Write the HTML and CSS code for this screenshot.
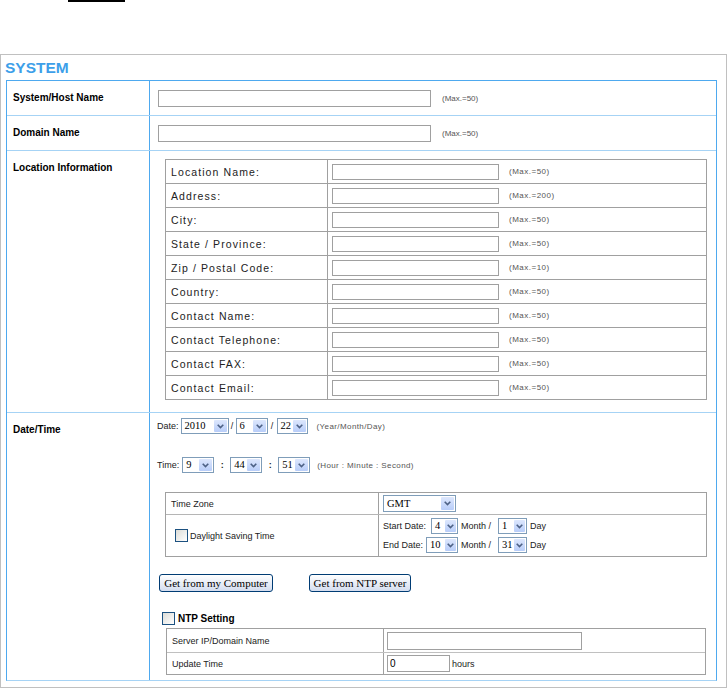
FILE: index.html
```html
<!DOCTYPE html>
<html>
<head>
<meta charset="utf-8">
<link rel="stylesheet" href="styles.css">
</head>
<body>
<div class="topbar"></div>
<div class="panel">
  <div class="title">SYSTEM</div>
  <div class="box">
    <div class="row r1">
      <div class="lab">System/Host Name</div>
      <div class="val simple"><input class="txt wide" type="text"><span class="max">(Max.=50)</span></div>
    </div>
    <div class="row r2">
      <div class="lab">Domain Name</div>
      <div class="val simple"><input class="txt wide" type="text"><span class="max">(Max.=50)</span></div>
    </div>
    <div class="row r3">
      <div class="lab">Location Information</div>
      <div class="val loccell">
        <div class="loc">
          <div class="lrow"><div class="lname">Location Name:</div><div class="lval"><input class="txt mid" type="text"><span class="max">(Max.=50)</span></div></div>
          <div class="lrow"><div class="lname">Address:</div><div class="lval"><input class="txt mid" type="text"><span class="max">(Max.=200)</span></div></div>
          <div class="lrow"><div class="lname">City:</div><div class="lval"><input class="txt mid" type="text"><span class="max">(Max.=50)</span></div></div>
          <div class="lrow"><div class="lname">State / Province:</div><div class="lval"><input class="txt mid" type="text"><span class="max">(Max.=50)</span></div></div>
          <div class="lrow"><div class="lname">Zip / Postal Code:</div><div class="lval"><input class="txt mid" type="text"><span class="max">(Max.=10)</span></div></div>
          <div class="lrow"><div class="lname">Country:</div><div class="lval"><input class="txt mid" type="text"><span class="max">(Max.=50)</span></div></div>
          <div class="lrow"><div class="lname">Contact Name:</div><div class="lval"><input class="txt mid" type="text"><span class="max">(Max.=50)</span></div></div>
          <div class="lrow"><div class="lname">Contact Telephone:</div><div class="lval"><input class="txt mid" type="text"><span class="max">(Max.=50)</span></div></div>
          <div class="lrow"><div class="lname">Contact FAX:</div><div class="lval"><input class="txt mid" type="text"><span class="max">(Max.=50)</span></div></div>
          <div class="lrow"><div class="lname">Contact Email:</div><div class="lval"><input class="txt mid" type="text"><span class="max">(Max.=50)</span></div></div>
        </div>
      </div>
    </div>
    <div class="row r4">
      <div class="lab">Date/Time</div>
      <div class="val dtcell">
        <div class="dline first">
          <span class="lbl">Date:</span>
          <span class="sel w48 ml2"><span class="v">2010</span><span class="arr"><svg width="7" height="5" viewBox="0 0 7 5"><path d="M0.7 0.7 L3.5 3.5 L6.3 0.7" stroke="#4d6185" stroke-width="1.6" fill="none"/></svg></span></span>
          <span class="sep s7">/</span>
          <span class="sel w32"><span class="v">6</span><span class="arr"><svg width="7" height="5" viewBox="0 0 7 5"><path d="M0.7 0.7 L3.5 3.5 L6.3 0.7" stroke="#4d6185" stroke-width="1.6" fill="none"/></svg></span></span>
          <span class="sep s9">/</span>
          <span class="sel w31"><span class="v">22</span><span class="arr"><svg width="7" height="5" viewBox="0 0 7 5"><path d="M0.7 0.7 L3.5 3.5 L6.3 0.7" stroke="#4d6185" stroke-width="1.6" fill="none"/></svg></span></span>
          <span class="hint h9">(Year/Month/Day)</span>
        </div>
        <div class="dline second">
          <span class="lbl">Time:</span>
          <span class="sel w32 ml3"><span class="v">9</span><span class="arr"><svg width="7" height="5" viewBox="0 0 7 5"><path d="M0.7 0.7 L3.5 3.5 L6.3 0.7" stroke="#4d6185" stroke-width="1.6" fill="none"/></svg></span></span>
          <span class="sep s16 colon">:</span>
          <span class="sel w32"><span class="v">44</span><span class="arr"><svg width="7" height="5" viewBox="0 0 7 5"><path d="M0.7 0.7 L3.5 3.5 L6.3 0.7" stroke="#4d6185" stroke-width="1.6" fill="none"/></svg></span></span>
          <span class="sep s16 colon">:</span>
          <span class="sel w32"><span class="v">51</span><span class="arr"><svg width="7" height="5" viewBox="0 0 7 5"><path d="M0.7 0.7 L3.5 3.5 L6.3 0.7" stroke="#4d6185" stroke-width="1.6" fill="none"/></svg></span></span>
          <span class="hint h7">(Hour : Minute : Second)</span>
        </div>

        <div class="tz">
          <div class="tzrow a">
            <div class="tzl">Time Zone</div>
            <div class="tzr"><span class="sel w73 tall"><span class="v">GMT</span><span class="arr"><svg width="7" height="5" viewBox="0 0 7 5"><path d="M0.7 0.7 L3.5 3.5 L6.3 0.7" stroke="#4d6185" stroke-width="1.6" fill="none"/></svg></span></span></div>
          </div>
          <div class="tzrow b">
            <div class="tzl chkcell"><span class="chk"></span><span>Daylight Saving Time</span></div>
            <div class="tzr two">
              <div class="sline">
                <span class="dl">Start Date:</span>
                <span class="sel w27 ml5 narrow"><span class="v">4</span><span class="arr"><svg width="7" height="5" viewBox="0 0 7 5"><path d="M0.7 0.7 L3.5 3.5 L6.3 0.7" stroke="#4d6185" stroke-width="1.6" fill="none"/></svg></span></span>
                <span class="mt">Month /</span>
                <span class="sel w29 narrow"><span class="v">1</span><span class="arr"><svg width="7" height="5" viewBox="0 0 7 5"><path d="M0.7 0.7 L3.5 3.5 L6.3 0.7" stroke="#4d6185" stroke-width="1.6" fill="none"/></svg></span></span>
                <span class="dy">Day</span>
              </div>
              <div class="sline">
                <span class="dl">End Date:</span>
                <span class="sel w32 ml3 narrow"><span class="v">10</span><span class="arr"><svg width="7" height="5" viewBox="0 0 7 5"><path d="M0.7 0.7 L3.5 3.5 L6.3 0.7" stroke="#4d6185" stroke-width="1.6" fill="none"/></svg></span></span>
                <span class="mt">Month /</span>
                <span class="sel w29 narrow"><span class="v">31</span><span class="arr"><svg width="7" height="5" viewBox="0 0 7 5"><path d="M0.7 0.7 L3.5 3.5 L6.3 0.7" stroke="#4d6185" stroke-width="1.6" fill="none"/></svg></span></span>
                <span class="dy">Day</span>
              </div>
            </div>
          </div>
        </div>

        <div class="btns">
          <button class="btn b1" type="button">Get from my Computer</button>
          <button class="btn b2" type="button">Get from NTP server</button>
        </div>

        <div class="ntph"><span class="chk"></span><span>NTP Setting</span></div>
        <div class="ntpt">
          <div class="nrow a">
            <div class="nl">Server IP/Domain Name</div>
            <div class="nr"><input class="txt srv" type="text"></div>
          </div>
          <div class="nrow b">
            <div class="nl">Update Time</div>
            <div class="nr"><input class="txt upd" type="text" value="0"><span class="hrs">hours</span></div>
          </div>
        </div>
      </div>
    </div>
  </div>
</div>
</body>
</html>
```

FILE: styles.css
```css
html, body {
  margin: 0;
  padding: 0;
  background: #fff;
}
body {
  width: 727px;
  height: 688px;
  overflow: hidden;
  font-family: "Liberation Sans", Arial, sans-serif;
  color: #000;
}
.topbar {
  width: 57px;
  height: 2px;
  margin-left: 68px;
  background: #000;
}
.panel {
  margin-top: 52px;
  width: 727px;
  height: 634px;
  box-sizing: border-box;
  border: 1px solid #c0c0c0;
}
.title {
  height: 25px;
  padding-left: 4px;
  font: bold 15.5px/25px "Liberation Sans", Arial, sans-serif;
  color: #3d9fe9;
}
.box {
  margin-left: 5px;
  width: 711px;
  box-sizing: border-box;
  border: 1px solid #4ea9ef;
  border-bottom-color: #a6d3f5;
}
.row {
  display: grid;
  grid-template-columns: 142px 1fr;
  border-top: 1px solid #a6d3f5;
}
.row:first-child { border-top: 0; }
.r1, .r2 { height: 34px; }
.r3 { height: 261px; }
.r4 { height: 267px; }
.lab {
  padding: 11px 0 0 6px;
  font: bold 10px/12px "Liberation Sans", Arial, sans-serif;
}
.val {
  border-left: 1px solid #4ea9ef;
}
.simple {
  display: flex;
  align-items: center;
  padding-left: 8px;
}
input.txt {
  box-sizing: border-box;
  margin: 0;
  padding: 0 2px;
  border: 1px solid #a0a0a0;
  background: #fff;
  outline: none;
  font: 10px "Liberation Sans", Arial, sans-serif;
  color: #000;
}
.wide { width: 273px; height: 17px; }
.max {
  margin-left: 11px;
  font: 8px "Liberation Sans", Arial, sans-serif;
  color: #555;
}

/* Location table */
.loccell { padding: 8px 0 0 15px; }
.loc {
  width: 542px;
  box-sizing: border-box;
  border: 1px solid #a0a0a0;
}
.lrow {
  display: grid;
  grid-template-columns: 162px 1fr;
  height: 23px;
  border-top: 1px solid #a0a0a0;
}
.lrow:first-child { border-top: 0; }
.lname {
  border-right: 1px solid #a0a0a0;
  padding-left: 5px;
  display: flex;
  align-items: center;
  font: 10.5px "Liberation Sans", Arial, sans-serif;
  letter-spacing: 1.1px;
  color: #222;
}
.lval {
  display: flex;
  align-items: center;
  padding-left: 4px;
}
.mid { width: 167px; height: 16px; }
.lval .max { margin-left: 10px; letter-spacing: 0.5px; }

/* Date / time */
.dtcell { padding-left: 7px; }
.dline {
  display: flex;
  align-items: center;
  height: 16px;
  font: 9px "Liberation Sans", Arial, sans-serif;
  color: #222;
}
.dline.first { margin-top: 5px; }
.dline.second { margin-top: 23px; }
.sel {
  display: inline-flex;
  box-sizing: border-box;
  height: 16px;
  border: 1px solid #7f9db9;
  background: #fff;
  align-items: stretch;
}
.sel.tall { height: 17px; }
.sel .v {
  flex: 1;
  padding-left: 3px;
  font: 10.5px/14px "Liberation Serif", "Times New Roman", serif;
  color: #000;
  white-space: nowrap;
}
.sel.tall .v { line-height: 15px; }
.sel .arr {
  width: 13px;
  margin: 1px;
  border-radius: 1px;
  background: linear-gradient(#dde7fd, #b8cdf9);
  display: flex;
  align-items: center;
  justify-content: center;
}
.sel.narrow .arr { width: 11px; }
.w27 { width: 27px; }
.w29 { width: 29px; }
.w31 { width: 31px; }
.w32 { width: 32px; }
.w48 { width: 48px; }
.w73 { width: 73px; }
.ml2 { margin-left: 2px; }
.ml3 { margin-left: 3px; }
.ml5 { margin-left: 5px; }
.sep { text-align: center; }
.s7 { width: 7px; }
.s9 { width: 9px; }
.s16 { width: 16px; }
.colon { font-weight: bold; }
.hint {
  font: 8px "Liberation Sans", Arial, sans-serif;
  letter-spacing: 0.4px;
  color: #555;
}
.h9 { margin-left: 9px; }
.h7 { margin-left: 7px; }

.tz {
  margin: 19px 0 0 8px;
  width: 542px;
  box-sizing: border-box;
  border: 1px solid #a0a0a0;
}
.tzrow {
  display: grid;
  grid-template-columns: 213px 1fr;
}
.tzrow.a { height: 21px; }
.tzrow.b { height: 41px; border-top: 1px solid #b5b5b5; }
.tzl {
  border-right: 1px solid #a0a0a0;
  display: flex;
  align-items: center;
  padding-left: 5px;
  font: 9px "Liberation Sans", Arial, sans-serif;
  color: #222;
}
.tzl.chkcell { padding-left: 9px; gap: 2px; }
.tzr {
  display: flex;
  align-items: center;
  padding-left: 4px;
}
.tzr.two {
  flex-direction: column;
  align-items: flex-start;
  justify-content: center;
  gap: 3px;
}
.sline {
  display: flex;
  align-items: center;
  height: 16px;
  font: 9px "Liberation Sans", Arial, sans-serif;
  color: #222;
}
.mt { margin: 0 7px 0 3px; }
.dy { margin-left: 3px; }
.chk {
  display: inline-block;
  width: 13px;
  height: 13px;
  box-sizing: border-box;
  border: 1px solid #1c5180;
  background: linear-gradient(135deg, #dcdcd7, #fff);
}

.btns {
  display: flex;
  gap: 36px;
  margin: 17px 0 0 2px;
}
.btn {
  box-sizing: border-box;
  height: 18px;
  margin: 0;
  padding: 0;
  border: 1px solid #003c74;
  border-radius: 3px;
  background: linear-gradient(#ffffff, #d4ddef);
  font: 11px/16px "Liberation Serif", "Times New Roman", serif;
  color: #000;
  text-align: center;
}
.b1 { width: 114px; }
.b2 { width: 102px; }

.ntph {
  display: flex;
  align-items: center;
  gap: 3px;
  height: 14px;
  margin: 19px 0 0 5px;
  font: bold 10px "Liberation Sans", Arial, sans-serif;
}
.ntpt {
  margin: 3px 0 0 9px;
  width: 540px;
  box-sizing: border-box;
  border: 1px solid #a0a0a0;
}
.nrow {
  display: grid;
  grid-template-columns: 217px 1fr;
}
.nrow.a { height: 23px; }
.nrow.b { height: 21px; border-top: 1px solid #c0c0c0; }
.nl {
  border-right: 1px solid #a0a0a0;
  display: flex;
  align-items: center;
  padding-left: 5px;
  font: 9px "Liberation Sans", Arial, sans-serif;
  color: #222;
}
.nr {
  display: flex;
  align-items: center;
  padding-left: 3px;
}
.srv { width: 195px; height: 18px; }
.upd { width: 63px; height: 17px; }
.hrs {
  margin-left: 2px;
  font: 9px "Liberation Sans", Arial, sans-serif;
  color: #222;
}
```
